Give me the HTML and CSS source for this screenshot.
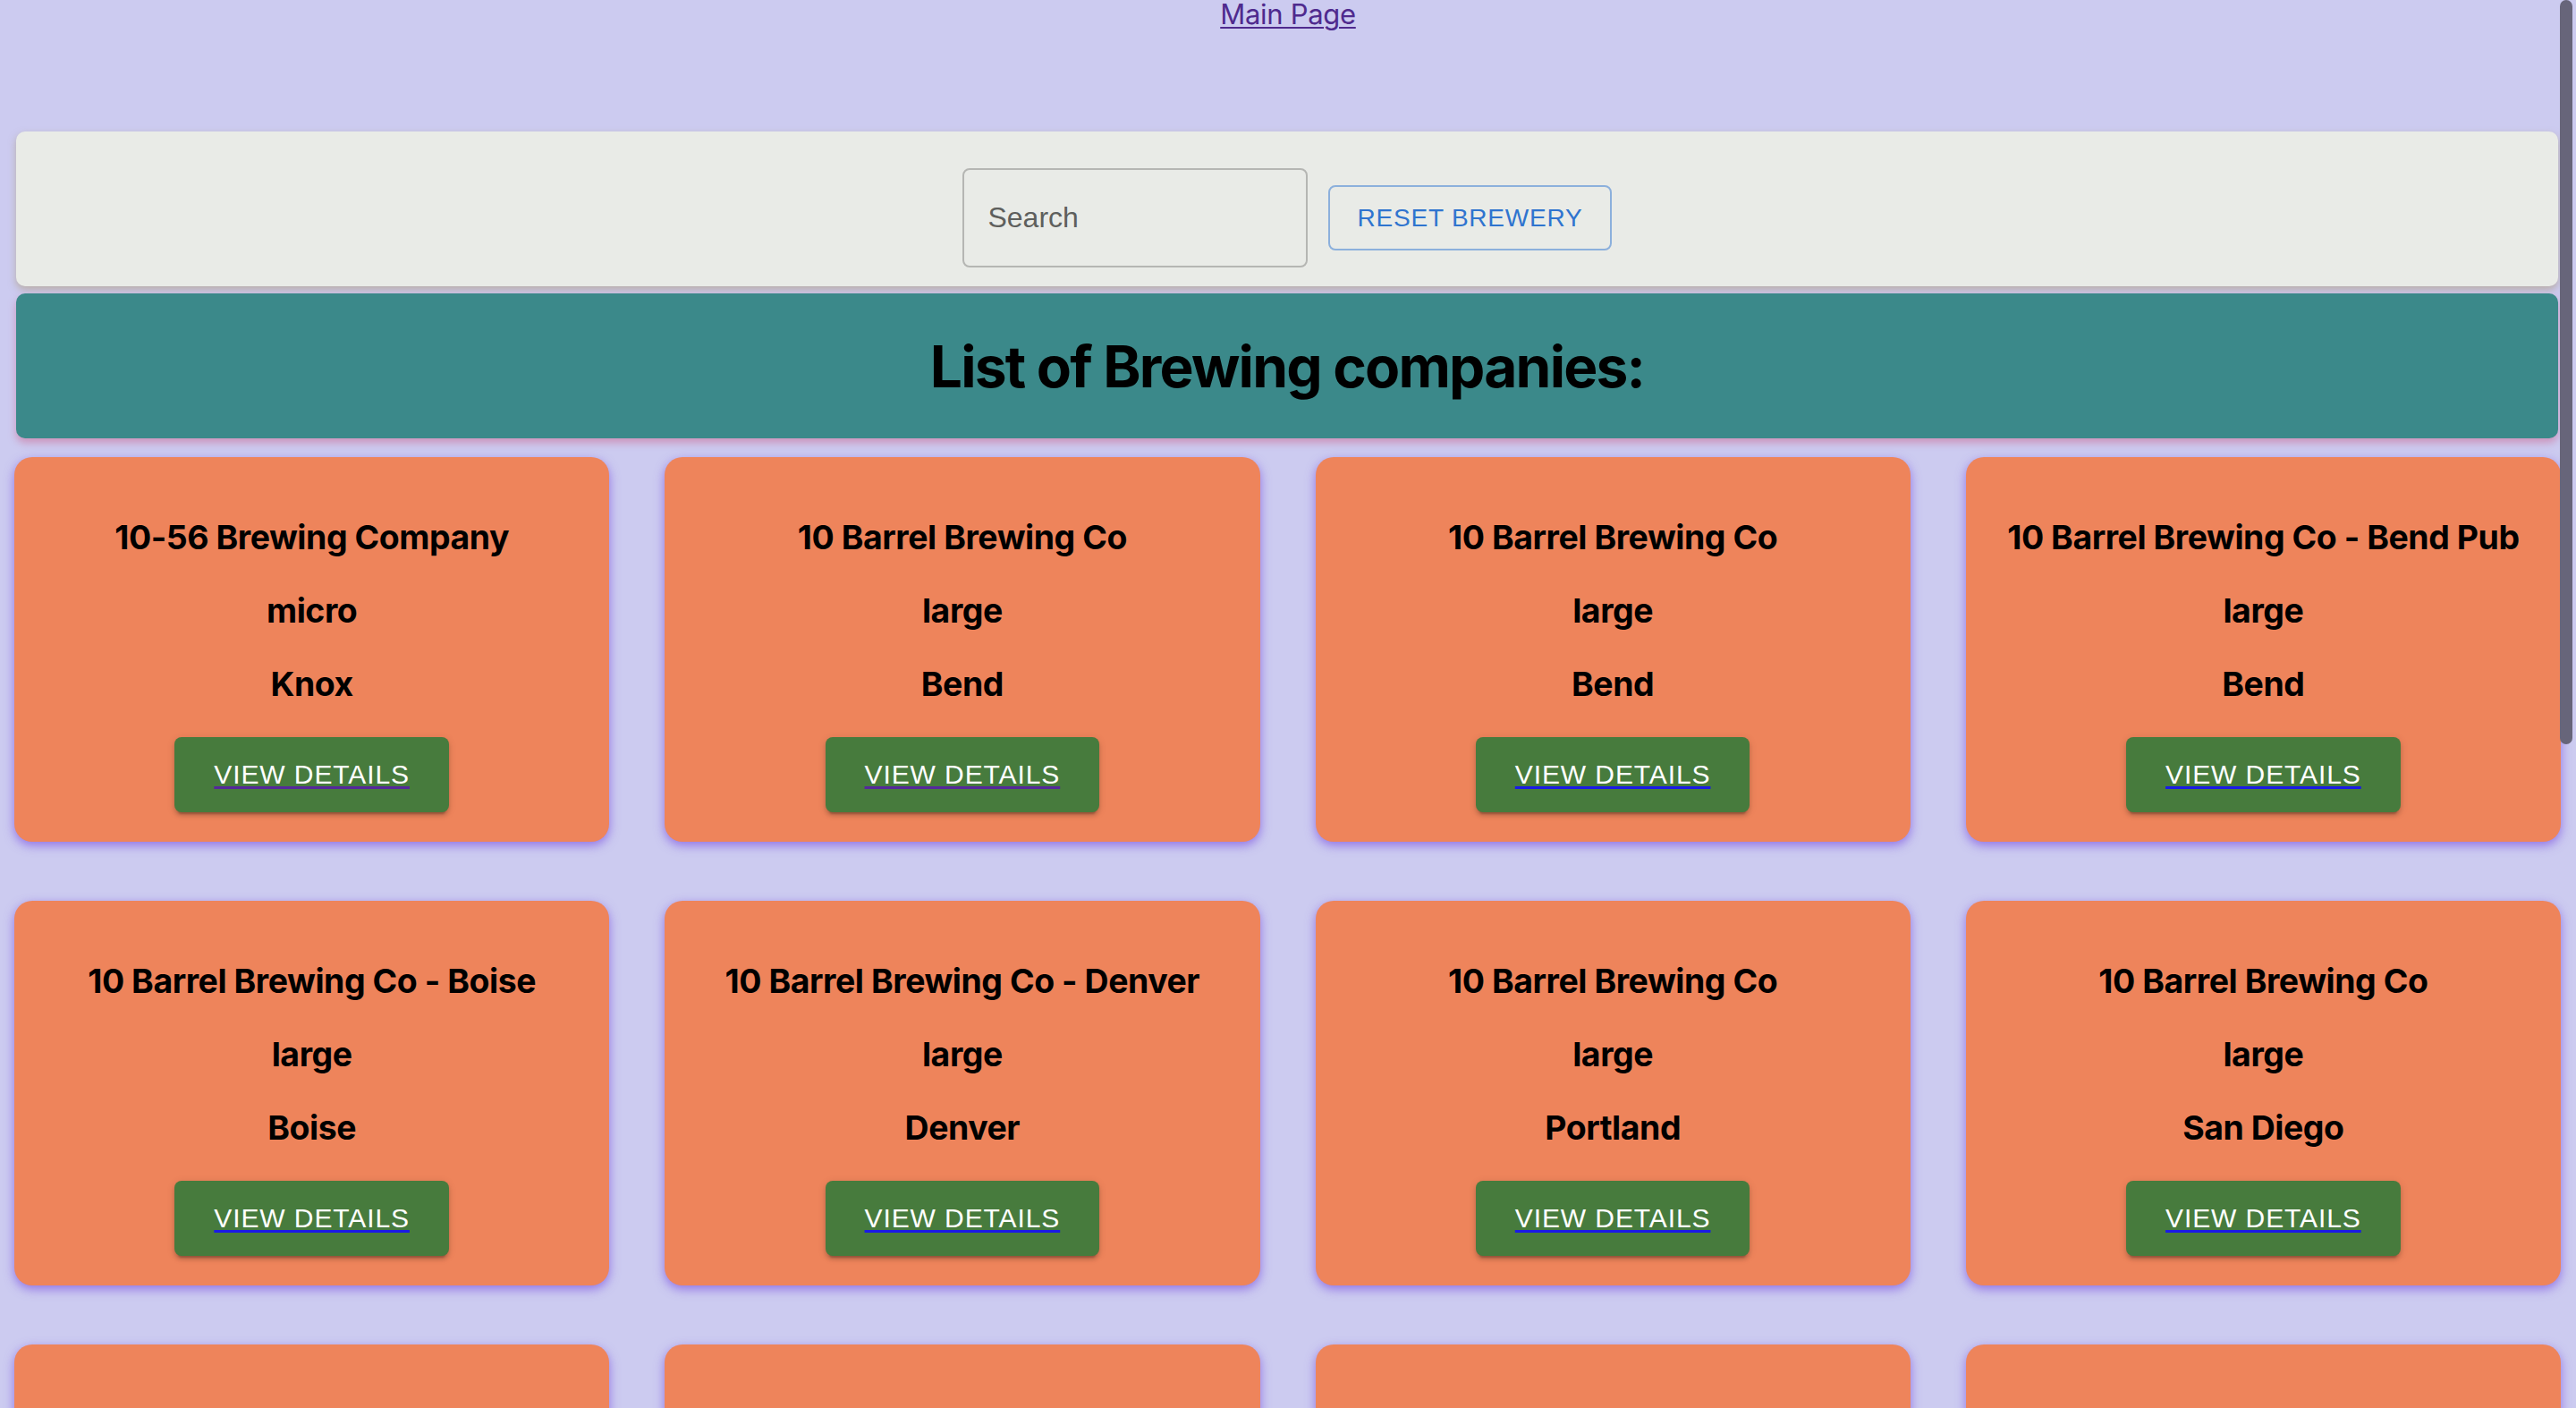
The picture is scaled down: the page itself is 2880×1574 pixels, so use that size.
FILE: index.html
```html
<!DOCTYPE html>
<html lang="en">
<head>
<meta charset="utf-8">
<title>Breweries</title>
<link rel="stylesheet" href="styles.css">
</head>
<body>
<div class="top-nav"><a class="main-link" href="#">Main Page</a></div>

<div class="search-bar">
  <div class="search-field"><span class="search-label">Search</span></div>
  <button class="reset-btn">RESET BREWERY</button>
</div>

<div class="list-header"><h1>List of Brewing companies:</h1></div>

<div class="card-grid">
  <div class="card"><h3>10-56 Brewing Company</h3><h3>micro</h3><h3>Knox</h3><div class="card-action"><a class="details-btn visited" href="#"><span>VIEW DETAILS</span></a></div></div>
  <div class="card"><h3>10 Barrel Brewing Co</h3><h3>large</h3><h3>Bend</h3><div class="card-action"><a class="details-btn visited" href="#"><span>VIEW DETAILS</span></a></div></div>
  <div class="card"><h3>10 Barrel Brewing Co</h3><h3>large</h3><h3>Bend</h3><div class="card-action"><a class="details-btn" href="#"><span>VIEW DETAILS</span></a></div></div>
  <div class="card"><h3>10 Barrel Brewing Co - Bend Pub</h3><h3>large</h3><h3>Bend</h3><div class="card-action"><a class="details-btn" href="#"><span>VIEW DETAILS</span></a></div></div>
  <div class="card"><h3>10 Barrel Brewing Co - Boise</h3><h3>large</h3><h3>Boise</h3><div class="card-action"><a class="details-btn" href="#"><span>VIEW DETAILS</span></a></div></div>
  <div class="card"><h3>10 Barrel Brewing Co - Denver</h3><h3>large</h3><h3>Denver</h3><div class="card-action"><a class="details-btn" href="#"><span>VIEW DETAILS</span></a></div></div>
  <div class="card"><h3>10 Barrel Brewing Co</h3><h3>large</h3><h3>Portland</h3><div class="card-action"><a class="details-btn" href="#"><span>VIEW DETAILS</span></a></div></div>
  <div class="card"><h3>10 Barrel Brewing Co</h3><h3>large</h3><h3>San Diego</h3><div class="card-action"><a class="details-btn" href="#"><span>VIEW DETAILS</span></a></div></div>
  <div class="card"><h3>10 Barrel Brewing Co</h3><h3>large</h3><h3>Sacramento</h3><div class="card-action"><a class="details-btn" href="#"><span>VIEW DETAILS</span></a></div></div>
  <div class="card"><h3>10 Barrel Brewing Co</h3><h3>large</h3><h3>Bend</h3><div class="card-action"><a class="details-btn" href="#"><span>VIEW DETAILS</span></a></div></div>
  <div class="card"><h3>10 Barrel Brewing Co</h3><h3>large</h3><h3>Bend</h3><div class="card-action"><a class="details-btn" href="#"><span>VIEW DETAILS</span></a></div></div>
  <div class="card"><h3>10 Barrel Brewing Co</h3><h3>large</h3><h3>Bend</h3><div class="card-action"><a class="details-btn" href="#"><span>VIEW DETAILS</span></a></div></div>
</div>

<div class="scroll-thumb"></div>
</body>
</html>
```

FILE: styles.css
```css
html {
  overflow: hidden;
}

body {
  margin: 0;
  background: #cccbf0;
  font-family: Inter, "Noto Sans", sans-serif;
}

.top-nav {
  height: 32px;
  line-height: 32px;
  text-align: center;
}

.main-link {
  font-size: 31px;
  letter-spacing: -0.3px;
  color: #4f2a8e;
  text-decoration: underline;
  text-decoration-thickness: 2px;
  text-underline-offset: 3px;
}

.search-bar {
  margin: 115px 20px 0 18px;
  height: 173px;
  box-sizing: border-box;
  padding: 42px 0 22px;
  background: #e9ebe7;
  border-radius: 10px;
  box-shadow: 0 4px 8px rgba(170, 150, 110, 0.55);
  display: flex;
  justify-content: center;
  align-items: center;
  gap: 23px;
}

.search-field {
  width: 386px;
  height: 111px;
  box-sizing: border-box;
  border: 2px solid #b5b6b3;
  border-radius: 8px;
  display: flex;
  align-items: center;
  padding-left: 26px;
}

.search-label {
  font-family: "Liberation Sans", Arial, sans-serif;
  font-size: 32px;
  color: #5e5f5d;
}

.reset-btn {
  height: 73px;
  box-sizing: border-box;
  padding: 0 30px;
  border: 2px solid #8cb0dc;
  border-radius: 8px;
  background: transparent;
  color: #2f74cf;
  font-family: "Liberation Sans", Arial, sans-serif;
  font-size: 28px;
  letter-spacing: 0.8px;
  font-weight: 500;
}

.list-header {
  margin: 8px 20px 0 18px;
  height: 162px;
  background: #3b898a;
  border-radius: 10px;
  box-shadow: 0 5px 9px rgba(205, 120, 160, 0.65);
  display: flex;
  align-items: center;
  justify-content: center;
}

.list-header h1 {
  margin: 0;
  font-size: 64px;
  font-weight: 700;
  letter-spacing: -1.8px;
  color: #000;
}

.card-grid {
  margin: 21px 17px 0 16px;
  display: grid;
  grid-template-columns: repeat(4, 1fr);
  column-gap: 62px;
  row-gap: 66px;
}

.card {
  background: #ee845b;
  border-radius: 20px;
  padding: 30px 0 33px;
  text-align: center;
  box-shadow: 0 4px 12px rgba(125, 85, 225, 0.75);
}

.card h3 {
  margin: 37px 0;
  font-size: 37.44px;
  line-height: 45px;
  font-weight: 700;
  letter-spacing: -0.45px;
  color: #000;
}

.card-action {
  display: flex;
  justify-content: center;
}

.details-btn {
  display: block;
  padding: 16px 44px;
  line-height: 52px;
  background: #477b3d;
  border-radius: 8px;
  color: #fff;
  font-family: "Liberation Sans", Arial, sans-serif;
  font-size: 30px;
  letter-spacing: 0.9px;
  text-decoration: none;
  box-shadow: 0 6px 2px -4px rgba(0, 0, 0, 0.2), 0 4px 4px 0 rgba(0, 0, 0, 0.14), 0 2px 10px 0 rgba(0, 0, 0, 0.12);
}

.details-btn span {
  text-decoration: underline;
  text-decoration-color: #1a1ae6;
  text-decoration-thickness: 3px;
  text-underline-offset: 3px;
}

.details-btn.visited span {
  text-decoration-color: #55289a;
}

.scroll-thumb {
  position: fixed;
  top: 0;
  right: 4px;
  width: 14px;
  height: 832px;
  border-radius: 7px;
  background: #67657a;
}
```
